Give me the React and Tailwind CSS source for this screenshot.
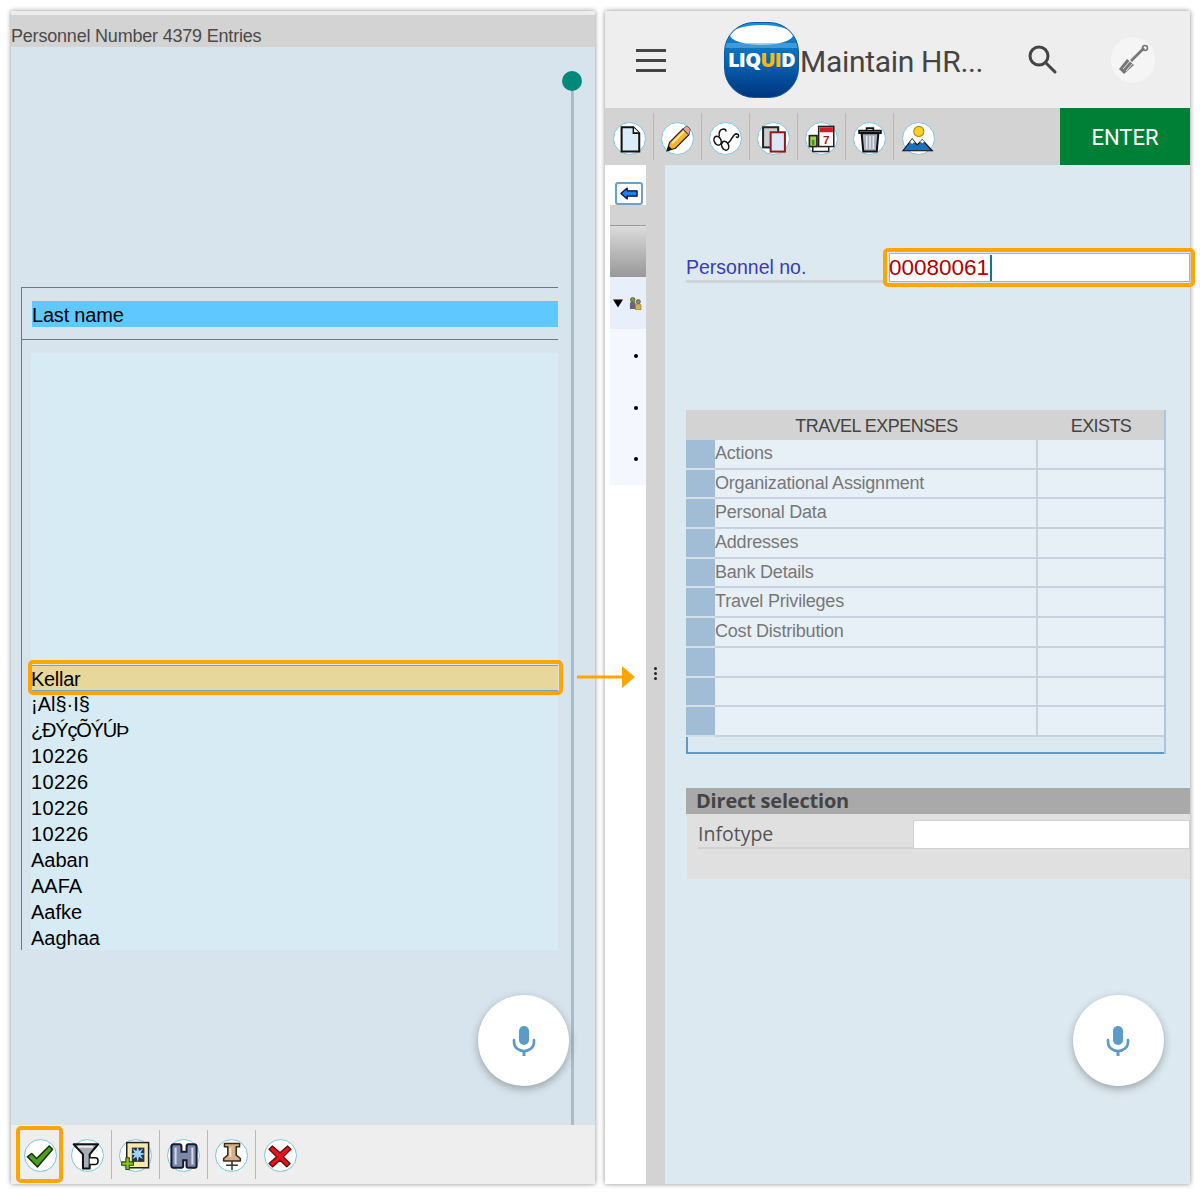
import React from "react";

const IconSvg = ({ children }) => (
  <svg viewBox="0 0 36 36" className="w-[36px] h-[36px] shrink-0 overflow-visible">{children}</svg>
);

const icons = {
  doc: (
    <IconSvg>
      <path d="M8 4h14l7 7v22H8z" fill="#dcecf8" stroke="#111" strokeWidth="2.400" />
      <path d="M22 4v7h7" fill="#fff" stroke="#111" strokeWidth="1.800" />
    </IconSvg>
  ),
  pencil: (
    <IconSvg>
      <path d="M5 32l3-10L24 6l7 7-16 16z" fill="#f5b32e" stroke="#222" strokeWidth="1.500" />
      <path d="M24 6l3-2.500c1-.7 2-.7 3 .2l2 2c.8 1 .8 2 0 3L31 13z" fill="#e8a0a8" stroke="#444" strokeWidth="1" />
      <path d="M11 23l14-14" stroke="#fbe39a" strokeWidth="2.400" />
      <path d="M5 32l1.800-6 4.200 4.200z" fill="#111" />
    </IconSvg>
  ),
  glasses: (
    <IconSvg>
      <ellipse cx="8" cy="20" rx="4" ry="5.500" fill="none" stroke="#111" strokeWidth="1.800" transform="rotate(-25 8 20)" />
      <ellipse cx="17" cy="26" rx="4" ry="5.500" fill="none" stroke="#111" strokeWidth="1.800" transform="rotate(-25 17 26)" />
      <path d="M10 15c-1-5 1-9 5-9 2 0 3 1 3 3M20 23c3-1 5-7 8-10 2-2 5-1 5 1s-2 3-3 1M12 22l2 1" fill="none" stroke="#111" strokeWidth="1.800" />
    </IconSvg>
  ),
  copy: (
    <IconSvg>
      <rect x="5" y="4" width="18" height="24" fill="#c9ced3" stroke="#222" strokeWidth="2.400" />
      <rect x="14" y="10" width="17" height="23" fill="#d9e9f7" stroke="#8a1c1c" strokeWidth="2.400" />
    </IconSvg>
  ),
  cal: (
    <IconSvg>
      <path d="M7 24v9h19V24" fill="#fff" stroke="#222" strokeWidth="1.800" />
      <rect x="3" y="14" width="9" height="13" fill="#a9d13e" stroke="#222" strokeWidth="2" />
      <rect x="6" y="19" width="3" height="6" fill="#3f8f2f" />
      <rect x="14" y="3" width="18" height="24" fill="#fff" stroke="#222" strokeWidth="1.800" />
      <rect x="15" y="4" width="16" height="6" fill="#c9202a" />
      <text x="23" y="24" textAnchor="middle" fontSize="14" fontWeight="700" fill="#a81a22" fontFamily="Liberation Sans, sans-serif">7</text>
    </IconSvg>
  ),
  trash: (
    <IconSvg>
      <path d="M5 8h26v3H5z" fill="#9aa3ad" stroke="#111" strokeWidth="2" />
      <path d="M14 8V5h8v3" fill="none" stroke="#111" strokeWidth="2" />
      <path d="M8 11h20l-2 22H10z" fill="#a6aebb" stroke="#111" strokeWidth="2.400" />
      <path d="M14 14v16M18 14v16M22 14v16" stroke="#e3e7ee" strokeWidth="1.800" />
    </IconSvg>
  ),
  mountain: (
    <IconSvg>
      <circle cx="19" cy="9" r="6" fill="#ffd21f" stroke="#b08a1a" strokeWidth="1.400" />
      <path d="M0 32l11-14 6 7 6-6 12 13z" fill="#1e6fc0" stroke="#111" strokeWidth="1.400" />
      <path d="M7.500 23l3.500-5 4 5-2-1-2 2-2-2zM20 22l3-3 3 3-1.500 0-1.500 1-1-1z" fill="#fff" />
    </IconSvg>
  ),
  check: (
    <IconSvg>
      <path d="M3 19l5-4 6 6L29 6l4 4-18 21z" fill="#4f9e1c" stroke="#14330a" strokeWidth="1.800" strokeLinejoin="round" />
    </IconSvg>
  ),
  funnel: (
    <IconSvg>
      <path d="M1 4h29l-10 12v17h-8V16z" fill="#a7aeb8" stroke="#111" strokeWidth="2.400" strokeLinejoin="round" />
      <path d="M6 7h18" stroke="#e8ebef" strokeWidth="2.400" />
      <path d="M20 20h7c4 0 4 8 0 8h-7" fill="#fff" stroke="#111" strokeWidth="1.800" />
    </IconSvg>
  ),
  spark: (
    <IconSvg>
      <rect x="7" y="2" width="26" height="30" fill="#f7e9ae" stroke="#222" strokeWidth="1.800" />
      <rect x="13" y="8" width="15" height="17" fill="#26324a" />
      <path d="M20 6l1.500 6 5-3-3 5 6 1.500-6 1.500 3 5-5-3-1.500 6-1.500-6-5 3 3-5-6-1.500 6-1.500-3-5 5 3z" fill="#9dd4f5" />
      <path d="M6 20v5H1v4h5v5h4v-5h5v-4h-5v-5z" fill="#8fc31f" stroke="#274a0a" strokeWidth="1.300" />
    </IconSvg>
  ),
  binoc: (
    <IconSvg>
      <path d="M3 30V7c0-2 1-3 3-3h7c1 0 2 1 2 3v6h6V7c0-2 1-3 2-3h7c2 0 3 1 3 3v23c0 1-1 2-2 2h-8c-1 0-2-1-2-2v-7h-4v7c0 1-1 2-2 2H5c-1 0-2-1-2-2z" fill="#7b86a8" stroke="#161a2c" strokeWidth="2.400" />
      <path d="M8 8v20M28 8v20" stroke="#d5daea" strokeWidth="2.400" />
    </IconSvg>
  ),
  pin: (
    <IconSvg>
      <path d="M9 3h18v4h-4v10l5 4v3H8v-3l5-4V7H9z" fill="#d6b187" stroke="#3a2a1a" strokeWidth="1.800" strokeLinejoin="round" />
      <path d="M16 8v11" stroke="#f2e2cc" strokeWidth="2.400" />
      <path d="M18 24v11M11 29h14" stroke="#333" strokeWidth="1.800" />
    </IconSvg>
  ),
  x: (
    <IconSvg>
      <path d="M9 6l9 8 9-8 4 4-9 9 8 8-4 4-8-8-9 8-4-4 9-8-9-9z" fill="#e3141f" stroke="#5a0a0a" strokeWidth="1.500" strokeLinejoin="round" />
    </IconSvg>
  ),
};

const ToolBtn = ({ name, sep, drop }) => (
  <div className={`w-[48px] h-full flex items-center justify-center ${sep ? "border-r border-[#a3bfd3]" : ""}`}>
    <div className={`w-[33px] h-[33px] rounded-full bg-white border border-[#7cc5e2] flex items-center justify-center ${drop}`}>
      <div className="scale-[0.84] flex items-center justify-center">{icons[name]}</div>
    </div>
  </div>
);

const MicFab = ({ className }) => (
  <div className={`absolute w-[91px] h-[91px] rounded-full bg-white shadow-[0_3px_8px_rgba(0,0,0,0.3)] flex items-center justify-center ${className}`}>
    <svg viewBox="0 0 24 32" className="w-[24px] h-[32px]" fill="#5a9bc8">
      <rect x="7" y="1" width="10" height="19" rx="5" />
      <path d="M2 15v2c0 5.500 4.500 9 10 9s10-3.500 10-9v-2" fill="none" stroke="#5a9bc8" strokeWidth="2.600" strokeLinecap="round" />
      <rect x="10.500" y="25" width="3" height="6" />
    </svg>
  </div>
);

const names = ["Kellar", "¡Al§·I§", "¿ÐÝçÕÝÚÞ", "10226", "10226", "10226", "10226", "Aaban", "AAFA", "Aafke", "Aaghaa"];
const rows = ["Actions", "Organizational Assignment", "Personal Data", "Addresses", "Bank Details", "Travel Privileges", "Cost Distribution", "", "", ""];

const LeftPanel = () => (
  <div className="relative w-[584px] h-[1173px] flex flex-col shadow-[0_0_5px_rgba(0,0,0,0.45)] font-['Liberation_Sans',sans-serif]">
    <div className="h-[36px] bg-[#d3d3d3] border-t-4 border-[#ececec] flex items-end text-[18px] leading-[22px] text-[#4a4a4a] tracking-[-0.2px]">
      <span>Personnel Number 4379 Entries</span>
    </div>
    <div className="relative h-[1078px] bg-[#d7e4ed] pt-[240px] pl-[10px]">
      <div className="w-[537px] border-l border-t border-[#6d7882]">
        <div className="h-[52px] pt-[13px] pl-[10px] border-b border-[#6d7882]">
          <div className="h-[26px] bg-[#5ec8ff] text-[20px] leading-[28px] text-black tracking-[-0.2px]">Last name</div>
        </div>
        <div className="pt-[13px] pl-[9px]">
          <div className="h-[597px] overflow-hidden bg-[#d7ebf5] pt-[312px] text-[20px] text-black">
            {names.map((n, i) => (
              <div key={i} className={`h-[26px] leading-[26px] ${i === 0 ? "bg-[#e8d79a] border-y border-[#6fa5c9] leading-[22px] tracking-[-0.3px]" : ""} ${i === 2 ? "tracking-[-1.2px]" : ""} ${i >= 3 && i <= 6 ? "tracking-[0.4px]" : ""}`}>
                <span>{n}</span>
              </div>
            ))}
          </div>
        </div>
      </div>
      <div className="absolute left-[560px] top-[34px] bottom-0 w-[3px] bg-[#a9bcc9]" />
      <div className="absolute left-[551px] top-[24px] w-[20px] h-[20px] rounded-full bg-[#00897b]" />
      <div className="absolute left-[17px] top-[613px] w-[535px] h-[35px] rounded-[5px] border-4 border-[#ffa500]" />
      <MicFab className="left-[467px] top-[948px]" />
    </div>
    <div className="relative h-[59px] bg-[#eeeeee] flex items-center pl-[5px] py-[5px]">
      <ToolBtn name="check" drop="mt-[2px]" />
      <ToolBtn name="funnel" sep drop="mt-[2px]" />
      <ToolBtn name="spark" sep drop="mt-[2px]" />
      <ToolBtn name="binoc" sep drop="mt-[2px]" />
      <ToolBtn name="pin" sep drop="mt-[2px]" />
      <ToolBtn name="x" drop="mt-[2px]" />
      <div className="absolute left-[5px] top-[1px] w-[47px] h-[57px] rounded-[5px] border-4 border-[#ffa500]" />
    </div>
  </div>
);

const RightPanel = () => (
  <div className="relative w-[585px] h-[1173px] flex flex-col shadow-[0_0_5px_rgba(0,0,0,0.45)] font-['Liberation_Sans',sans-serif]">
    <header className="h-[97px] bg-[#eeeeee] flex items-center relative">
      <div className="ml-[31px] w-[30px] flex flex-col gap-[7px] mt-[1px]">
        <div className="h-[3px] bg-[#444]" />
        <div className="h-[3px] bg-[#444]" />
        <div className="h-[3px] bg-[#444]" />
      </div>
      <div className="relative ml-[58px] w-[75px] h-[76px] rounded-[30px] bg-gradient-to-b from-[#1a8fd6] via-[#0a66b4] to-[#013580] overflow-hidden flex items-center justify-center border border-[#0b5a9e]">
        <div className="absolute left-[5px] right-[5px] top-[2px] h-[20px] rounded-[50%] bg-white" />
        <div className="absolute left-0 right-0 top-[20px] h-[5px] bg-[#5db4e6] opacity-60" />
        <div className="relative mt-[1px] text-[20px] leading-[20px] font-extrabold text-white tracking-[-0.7px] font-['Open_Sans',sans-serif]">
          LIQ<span className="text-[#f5b81c]">UI</span>D
        </div>
      </div>
      <div className="ml-[1px] text-[30px] leading-[36px] text-[#444] font-['Roboto',sans-serif] mt-[4px] tracking-[-0.3px]">Maintain HR...</div>
      <svg viewBox="0 0 30 30" className="absolute left-[422px] top-[33px] w-[30px] h-[30px]" fill="none" stroke="#444" strokeWidth="3">
        <circle cx="12" cy="12" r="9" />
        <path d="M19 19l9 9" strokeLinecap="round" />
      </svg>
      <div className="absolute left-[506px] top-[26px] w-[44px] h-[46px] rounded-full bg-[#f5f5f5] flex items-center justify-center">
        <svg viewBox="0 0 32 32" className="w-[32px] h-[32px]">
          <path d="M2 25l8-10 7 6-10 9z" fill="#777" />
          <path d="M6 25l7-8M9 27l7-8" stroke="#eee" strokeWidth="1" />
          <path d="M14 17l13-13" stroke="#777" strokeWidth="2.600" />
          <circle cx="28" cy="4" r="2.500" fill="none" stroke="#777" strokeWidth="1.600" />
        </svg>
      </div>
    </header>
    <div className="h-[57px] bg-[#d3d3d3] flex justify-between">
      <div className="flex h-full items-center py-[5px] pl-[1px]">
        <ToolBtn name="doc" sep drop="mt-[4px]" />
        <ToolBtn name="pencil" sep drop="mt-[4px]" />
        <ToolBtn name="glasses" sep drop="mt-[4px]" />
        <ToolBtn name="copy" sep drop="mt-[4px]" />
        <ToolBtn name="cal" sep drop="mt-[4px]" />
        <ToolBtn name="trash" sep drop="mt-[4px]" />
        <ToolBtn name="mountain" drop="mt-[4px]" />
      </div>
      <div className="w-[130px] bg-[#007f36] text-white text-[22px] leading-[26px] pt-[2px] font-['Roboto',sans-serif] flex items-center justify-center">ENTER</div>
    </div>
    <div className="relative flex-1 flex">
      <div className="w-[41px] bg-white pl-[5px]">
        <div className="h-[40px] pt-[17px] pl-[5px]">
          <div className="w-[28px] h-[23px] rounded-[3px] border-2 border-[#6a9fc9] bg-white flex items-center justify-center">
            <svg viewBox="0 0 20 14" className="w-[18px] h-[13px]">
              <path d="M1 7l7-6v3h11v6H8v3z" fill="#1e7df0" stroke="#0a0a3a" strokeWidth="1.400" strokeLinejoin="round" />
            </svg>
          </div>
        </div>
        <div className="h-[20px] bg-[#d3d3d3]" />
        <div className="h-[52px] bg-gradient-to-b from-[#dcdcdc] to-[#989898] border-t border-[#9a9a9a]" />
        <div className="h-[52px] bg-[#e8effb] flex items-center pl-[3px] gap-[6px]">
          <svg viewBox="0 0 10 8" className="w-[10px] h-[9px]"><path d="M0 0h10L5 8z" fill="#000" /></svg>
          <svg viewBox="0 0 14 14" className="w-[13px] h-[13px]">
            <circle cx="4" cy="3" r="2.500" fill="#7a9a3a" stroke="#333" strokeWidth=".6" />
            <path d="M1 13V7c0-1 1-1.500 3-1.500S7 6 7 7v6z" fill="#667" />
            <circle cx="10" cy="5" r="2.300" fill="#a38a4a" stroke="#333" strokeWidth=".6" />
            <path d="M7 14V9c0-1 1-1.500 3-1.500S13 8 13 9v5z" fill="#d4b04a" stroke="#555" strokeWidth=".5" />
          </svg>
        </div>
        <div className="h-[156px] pt-[1px] bg-[#f4f7fe] flex flex-col items-center pl-[15px]">
          {[0, 1, 2].map((i) => (
            <div key={i} className="h-[52px] flex items-center">
              <div className="w-[4px] h-[4px] rounded-full bg-black" />
            </div>
          ))}
        </div>
      </div>
      <div className="w-[19px] bg-[#d3d3d3] flex flex-col items-center justify-start pt-[502px] gap-[2px]">
        <div className="w-[3px] h-[3px] rounded-full bg-[#222]" />
        <div className="w-[3px] h-[3px] rounded-full bg-[#222]" />
        <div className="w-[3px] h-[3px] rounded-full bg-[#222]" />
      </div>
      <main className="flex-1 bg-[#dde9f1] pl-[21px] pt-[84px] overflow-hidden">
        <div className="flex h-[34px]">
          <div className="w-[200px] h-[34px] border-b-[3px] border-[#d0d4d8] text-[19.5px] leading-[36px] text-[#3a3ab5]">Personnel no.</div>
          <div className="ml-[3px] flex-1 h-[29px] mt-[4px] bg-white text-[22.5px] leading-[28px] text-[#b30000] border border-[#9fb4c4] flex">
            <span className="-ml-[1px]">00080061</span>
            <span className="ml-[1px] w-[2px] h-[26px] mt-[1px] bg-[#0a7c86]" />
          </div>
        </div>
        <div className="mt-[127px] w-[480px] border-r-2 border-[#a8c8e0]">
          <div className="h-[30px] bg-[#d3d3d3] flex text-[18px] leading-[32px] text-[#444]">
            <div className="w-[29px]" />
            <div className="w-[323px] text-center tracking-[-0.5px]">TRAVEL EXPENSES</div>
            <div className="flex-1 text-center tracking-[-0.6px]">EXISTS</div>
          </div>
          {rows.map((r, i) => (
            <div key={i} className="h-[29.7px] flex text-[18px] leading-[26px] text-[#777] tracking-[-0.2px]">
              <div className="w-[29px] bg-[#a0bdd5] border-b-2 border-[#d5dfe8]" />
              <div className="w-[323px] bg-[#e8f0f7] border-b-2 border-r-2 border-[#c6d3df]">{r}</div>
              <div className="flex-1 bg-[#e8f0f7] border-b-2 border-[#c6d3df]" />
            </div>
          ))}
          <div className="h-[17px] border-b-2 border-l-2 border-[#5b9bcb]" />
        </div>
        <div className="mt-[34px] h-[26px] bg-[#a9a9a9] pl-[10px] text-[20px] leading-[26px] font-bold text-[#444] font-['Open_Sans',sans-serif] tracking-[-0.2px]">Direct selection</div>
        <div className="h-[65px] ml-[1px] bg-[#e0e0e0] pl-[11px] pt-[6px] font-['Open_Sans',sans-serif]">
          <div className="flex">
            <div className="w-[215px] h-[29px] border-b-2 border-[#d0d0d0] text-[19.5px] leading-[27px] text-[#555]">Infotype</div>
            <div className="flex-1 h-[29px] bg-white border border-[#d3d3d3]" />
          </div>
        </div>
      </main>
      <MicFab className="left-[467.5px] top-[830px]" />
    </div>
    <div className="absolute left-[278px] top-[237px] w-[312px] h-[39px] rounded-[5px] border-4 border-[#ffa500]" />
  </div>
);

export default function App() {
  return (
    <div className="relative w-[1200px] h-[1194px] bg-white overflow-hidden flex gap-[10px] pt-[11px] pl-[11px]">
      <LeftPanel />
      <RightPanel />
      <svg viewBox="0 0 58 24" className="absolute left-[577px] top-[665px] w-[58px] h-[24px]">
        <path d="M0 12h46" stroke="#ffa500" strokeWidth="3" />
        <path d="M45 1l13 11-13 11z" fill="#ffa500" />
      </svg>
    </div>
  );
}
